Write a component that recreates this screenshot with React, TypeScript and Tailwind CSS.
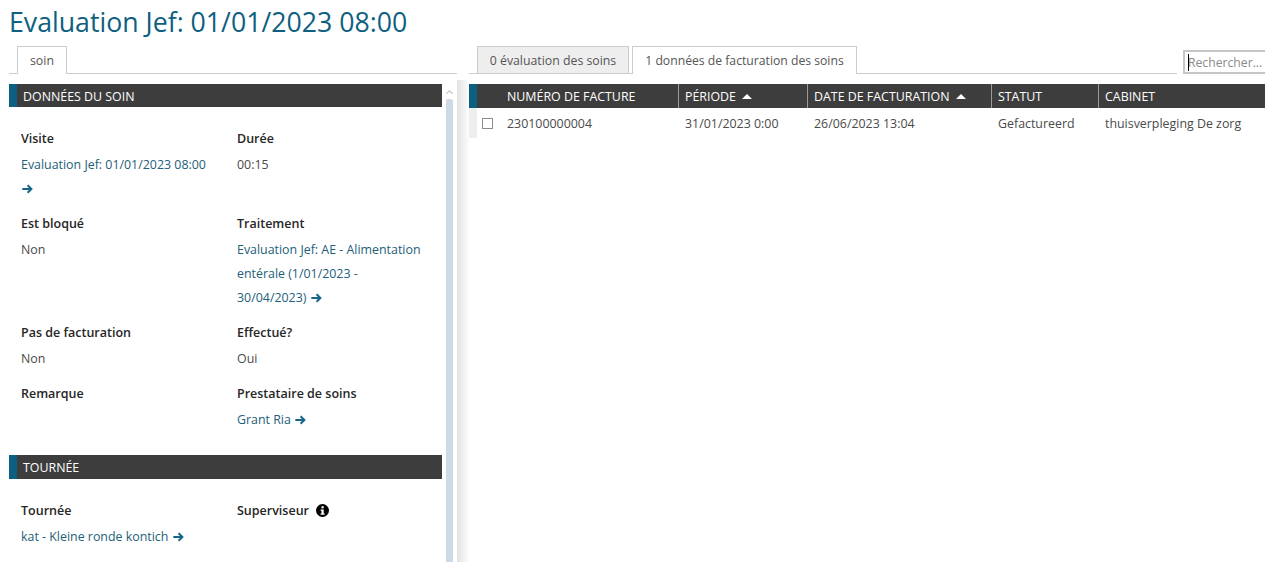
const ff = "font-['Open_Sans','Noto_Sans',sans-serif]";
function Arrow({ className = "" }: { className?: string }) {
  return (
    <svg viewBox="0 0 11 10" className={"inline-block w-[11px] h-[10px] ml-[1px] " + className} fill="none" stroke="#16668a" strokeWidth="2">
      <path d="M0.3 5H9.3M5.6 1.2L9.4 5L5.6 8.8" />
    </svg>
  );
}
function SectionHeader({ title, h }: { title: string; h: string }) {
  return (
    <div className={`flex w-[433px] bg-[#3d3d3d] text-white ${h}`}>
      <div className="w-[8px] bg-[#0b5f80]" />
      <div className="pl-[6px] text-[12.4px] leading-[25px]">{title}</div>
    </div>
  );
}
function Field({ label, children, h }: { label: React.ReactNode; children?: React.ReactNode; h: string }) {
  return (
    <div className={h}>
      <div className="text-[12.5px] font-semibold leading-[24px] text-[#262626]">{label}</div>
      <div className="mt-[2px] text-[12.4px] leading-[24px] text-[#4a4a4a]">{children}</div>
    </div>
  );
}
const link = "text-[#22607a]";
function Th({ w, children, first }: { w: string; children: React.ReactNode; first?: boolean }) {
  return (
    <div className={`${w} h-full pl-[6px] leading-[25px] ${first ? "" : "border-l border-[#9a9a9a]"}`}>{children}</div>
  );
}
function Up() {
  return <span className="ml-[3px] inline-block align-[2px] border-x-[5px] border-b-[5px] border-x-transparent border-b-white" />;
}
export default function App() {
  return (
    <div className={`${ff} relative h-[562px] w-[1265px] overflow-hidden bg-white`}>
      <h1 className="pl-[9px] pt-[4px] text-[26.7px] leading-[36px] text-[#0e5f80]">Evaluation Jef: 01/01/2023 08:00</h1>
      <div className="mt-[6px] flex">
        <div className="ml-[9px] w-[448px] shrink-0">
          <div className="h-[28px] w-[448px] border-b border-[#cccccc] pl-[8px]">
            <div className="h-[28px] w-[50px] border border-b-0 border-[#cccccc] bg-white text-center text-[12.4px] leading-[28px] text-[#555555]">soin</div>
          </div>
          <div className="relative mt-[10px] h-[479px] w-[448px]">
            <SectionHeader title="DONNÉES DU SOIN" h="h-[23px]" />
            <div className="grid w-[433px] grid-cols-[216px_1fr] pl-[12px] pt-[19.5px]">
              <Field label="Visite" h="h-[85px]">
                <div className={link}>Evaluation Jef: 01/01/2023 08:00</div>
                <Arrow />
              </Field>
              <Field label="Durée" h="h-[85px]">00:15</Field>
              <Field label="Est bloqué" h="h-[109px]">Non</Field>
              <Field label="Traitement" h="h-[109px]">
                <div className={`${link} w-[190px]`}>Evaluation Jef: AE - Alimentation entérale (1/01/2023 - 30/04/2023) <Arrow /></div>
              </Field>
              <Field label="Pas de facturation" h="h-[61px]">Non</Field>
              <Field label="Effectué?" h="h-[61px]">Oui</Field>
              <Field label="Remarque" h="h-[62px]" />
              <Field label="Prestataire de soins" h="h-[62px]">
                <span className={link}>Grant Ria <Arrow /></span>
              </Field>
            </div>
            <div className="mt-[11px]"><SectionHeader title="TOURNÉE" h="h-[24px]" /></div>
            <div className="grid w-[433px] grid-cols-[216px_1fr] pl-[12px] pt-[20px]">
              <Field label="Tournée" h="h-[60px]">
                <span className={link}>kat - Kleine ronde kontich <Arrow /></span>
              </Field>
              <Field label={<span className="flex items-center gap-[7px]">Superviseur
                <svg viewBox="0 0 14 14" className="h-[13px] w-[13px]"><circle cx="7" cy="7" r="7" fill="#000" /><rect x="5.9" y="2.4" width="2.4" height="2.3" fill="#fff" /><path d="M4.9 6h3.4v4.3h1v1.3H4.9v-1.3h1V7.3h-1z" fill="#fff" /></svg>
              </span>} h="h-[60px]" />
            </div>
            <div className="absolute left-[437px] top-[15px] h-[464px] w-[7px] rounded-t-[2px] bg-[#cdd9e4]" />
            <svg viewBox="0 0 8 5" className="absolute left-[437px] top-[5px] h-[6px] w-[7px]" fill="none" stroke="#c4c4c4" strokeWidth="1.3"><path d="M0.5 4.5L4 1L7.5 4.5" /></svg>
          </div>
        </div>
        <div className="absolute left-[457px] top-[80px] h-[482px] w-[13px] bg-linear-to-r from-[#e2e2e2] to-white" />
        <div className="relative ml-[12px] min-w-0 flex-1">
          <div className="flex h-[28px] items-end border-b border-[#cccccc] pl-[8px] mr-[88px]">
            <div className="h-[27px] w-[152px] border border-b-0 border-[#cccccc] bg-[#eeeeee] text-center text-[12.3px] leading-[27px] text-[#555555]">0 évaluation des soins</div>
            <div className="relative top-[1px] ml-[3px] h-[28px] w-[225px] border border-b-0 border-[#cccccc] bg-white text-center text-[12.2px] leading-[28px] text-[#555555]">1 données de facturation des soins</div>
          </div>
          <div className="mt-[10px] flex h-[24px] bg-[#3d3d3d] text-[12.4px] text-white">
            <div className="w-[8px] bg-[#0b5f80]" />
            <div className="w-[24px]" />
            <Th w="w-[177px]" first>NUMÉRO DE FACTURE</Th>
            <Th w="w-[129px]">PÉRIODE <Up /></Th>
            <Th w="w-[184px]">DATE DE FACTURATION <Up /></Th>
            <Th w="w-[107px]">STATUT</Th>
            <Th w="w-[167px]">CABINET</Th>
          </div>
          <div className="flex h-[30px] text-[12.4px] leading-[32px] text-[#4a4a4a]">
            <div className="flex w-[8px] bg-[#eeeeee]" />
            <div className="flex w-[24px] items-center pl-[5px]"><div className="h-[11px] w-[11px] border border-[#8c8c8c]" /></div>
            <div className="w-[177px] pl-[6px]">230100000004</div>
            <div className="w-[129px] pl-[7px]">31/01/2023 0:00</div>
            <div className="w-[184px] pl-[7px]">26/06/2023 13:04</div>
            <div className="w-[107px] pl-[7px]">Gefactureerd</div>
            <div className="w-[167px] pl-[7px]">thuisverpleging De zorg</div>
          </div>
        </div>
      </div>
      <input readOnly placeholder="Rechercher..." className="absolute left-[1183px] top-[50px] h-[24px] w-[82px] border-2 border-r-0 border-[#c6c6c6] pl-[3px] text-[12.2px] text-[#777] outline-none placeholder:text-[#8a8a8a]" />
      <div className="absolute left-[1188px] top-[54px] h-[17px] w-px bg-black" />
    </div>
  );
}
